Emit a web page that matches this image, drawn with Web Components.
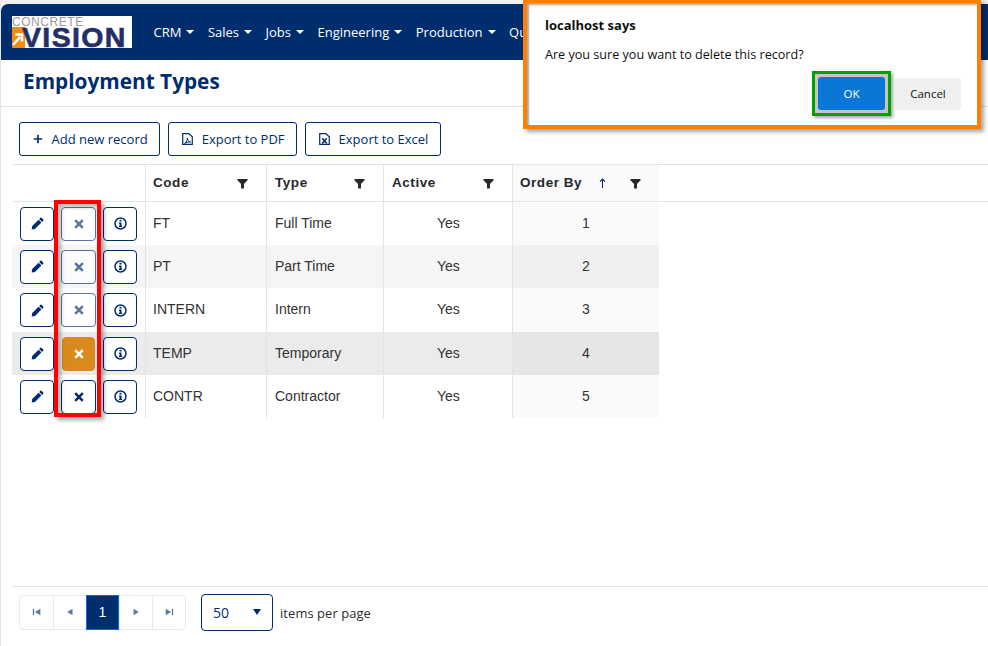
<!DOCTYPE html>
<html lang="en">
<head>
<meta charset="utf-8">
<title>Employment Types</title>
<style>
  html, body { margin: 0; height: 100%; background: #fff; }
  body { font-family: "Open Sans", sans-serif; overflow: hidden; }
</style>
</head>
<body>
<app-page>
  <nav-bar slot="nav"></nav-bar>
  <page-title slot="title">Employment Types</page-title>
  <tool-bar slot="tools">
    <tool-button icon="plus">Add new record</tool-button>
    <tool-button icon="pdf">Export to PDF</tool-button>
    <tool-button icon="excel">Export to Excel</tool-button>
  </tool-bar>
  <data-grid slot="grid"></data-grid>
  <grid-pager slot="pager"></grid-pager>
  <alert-dialog slot="overlay" title="localhost says" message="Are you sure you want to delete this record?"></alert-dialog>
  <mark-box slot="overlay" color="#ff0000" style="left:54px;top:200px;width:47px;height:217px"></mark-box>
</app-page>

<script>
const ICONS = {
    plus: '<path d="M5 1h2v4h4v2H7v4H5V7H1V5h4z"/>',
    pencil: '<path d="M9.7.8l1.6 1.6a.7.7 0 010 1L10.3 4.5 7.6 1.8 8.7.8a.7.7 0 011 0zM7 2.5l2.6 2.6-5.9 5.9-3.1.6.5-3.2z"/>',
    filter: '<path d="M.5 1h11v1.5L7.6 6.5v5H4.4v-5L.5 2.5z"/>',
    first: '<path d="M1 2h1.6v8H1zM10 2v8L3.4 6z"/>',
    prev: '<path d="M9 2v8L2.6 6z"/>',
    next: '<path d="M3 2v8l6.4-4z"/>',
    last: '<path d="M11 2H9.4v8H11zM2 2v8l6.6-4z"/>'
};

function svgIcon(name, size) {
    return `<svg width="${size}" height="${size}" viewBox="0 0 12 12" fill="currentColor" aria-hidden="true">${ICONS[name]}</svg>`;
}

class AppPage extends HTMLElement {
    constructor() {
        super();
        this.attachShadow({ mode: 'open' }).innerHTML = `
            <style>
                :host { display: flex; flex-direction: column; position: relative; width: 988px; height: 646px; overflow: hidden; background: #fff; }
                .top { height: 4px; background: #f1f1f1; }
                .body { flex: 1; display: flex; flex-direction: column; min-height: 0; border-left: 1px solid #e4e4e4; }
                .fill { flex: 1; min-height: 0; padding-left: 11px; }
                .foot { padding-left: 11px; }
            </style>
            <div class="top"></div>
            <div class="body">
                <slot name="nav"></slot>
                <slot name="title"></slot>
                <slot name="tools"></slot>
                <div class="fill"><slot name="grid"></slot></div>
                <div class="foot"><slot name="pager"></slot></div>
            </div>
            <slot name="overlay"></slot>
        `;
    }
}

class NavBar extends HTMLElement {
    constructor() {
        super();
        // the last item is hidden by the dialog after its first two letters
        const items = ['CRM', 'Sales', 'Jobs', 'Engineering', 'Production'];
        this.attachShadow({ mode: 'open' }).innerHTML = `
            <style>
                :host { display: flex; align-items: center; height: 56px; background: #002d6e; border-top-left-radius: 7px; box-sizing: border-box; padding-left: 11px; overflow: hidden; font: 13px "Open Sans", sans-serif; color: #fff; }
                .logo { width: 120px; height: 32px; background: #fff; flex: none; margin-right: 21.5px; box-sizing: border-box; padding-top: 1.5px; display: flex; flex-direction: column; }
                .small { font: 12px/9px "Liberation Sans", sans-serif; color: #9a9a9a; letter-spacing: .55px; height: 9px; }
                .line { display: flex; margin-top: .5px; height: 21px; }
                .arrow { width: 13px; height: 21px; background: #f08c0f; flex: none; }
                .arrow svg { display: block; }
                .big { font: 700 28.5px/21px "Liberation Sans", sans-serif; -webkit-text-stroke: .6px #232f68; color: #232f68; letter-spacing: 1.35px; white-space: nowrap; margin-left: -3px; }
                .item { display: flex; align-items: center; gap: 5px; margin-right: 13.5px; white-space: nowrap; flex: none; }
                .item i { width: 0; height: 0; border: 4px solid transparent; border-top-color: #fff; border-bottom: 0; }
            </style>
            <div class="logo">
                <span class="small">CONCRETE</span>
                <div class="line">
                    <div class="arrow"><svg width="13" height="21" viewBox="0 0 13 21"><path d="M1 18L8 10M3.5 7.5h6.5v7" fill="none" stroke="#fff" stroke-width="2.6"/></svg></div>
                    <span class="big">VISION</span>
                </div>
            </div>
            ${items.map(t => `<div class="item">${t}<i></i></div>`).join('')}
            <div class="item">Qu</div>
        `;
    }
}

class PageTitle extends HTMLElement {
    constructor() {
        super();
        this.attachShadow({ mode: 'open' }).innerHTML = `
            <style>
                :host { display: block; height: 47px; box-sizing: border-box; border-bottom: 1px solid #e2e2e2; padding: 5px 0 0 22px; font: 700 20.8px/32px "Open Sans", sans-serif; color: #002d6e; }
            </style>
            <slot></slot>
        `;
    }
}

class ToolBar extends HTMLElement {
    constructor() {
        super();
        this.attachShadow({ mode: 'open' }).innerHTML = `
            <style>
                :host { display: flex; gap: 8px; padding: 15px 0 0 18px; height: 42px; }
            </style>
            <slot></slot>
        `;
    }
}

class ToolButton extends HTMLElement {
    constructor() {
        super();
        const icon = this.getAttribute('icon');
        let glyph = '';
        if (icon === 'plus') {
            glyph = svgIcon('plus', 10);
        } else {
            // page outline with a small mark in it
            const mark = icon === 'pdf'
                ? '<path d="M2.6 10.4c2-1 3-3.8 2.6-5.4.7 2.2 1.5 3.4 3.4 4-2-.2-4.2.3-6 1.4z" fill="none" stroke="currentColor"/>'
                : '<path d="M3.2 5.2l4.6 5.4M7.8 5.2l-4.6 5.4" fill="none" stroke="currentColor" stroke-width="1.5"/>';
            glyph = `<svg width="11" height="12" viewBox="0 0 11 12"><path d="M.7.7h6.2l3.4 3v7.6H.7z" fill="none" stroke="currentColor" stroke-width="1.2"/>${mark}</svg>`;
        }
        this.attachShadow({ mode: 'open' }).innerHTML = `
            <style>
                :host { display: inline-flex; align-items: center; gap: 8.5px; height: 34px; box-sizing: border-box; padding: 0 11.5px 0 13px; border: 1px solid #002d6e; border-radius: 3px; color: #002d6e; font: 13px "Open Sans", sans-serif; white-space: nowrap; }
                span { display: flex; }
            </style>
            <span>${glyph}</span><slot></slot>
        `;
    }
}

class ActionButton extends HTMLElement {
    constructor() {
        super();
        const kind = this.getAttribute('kind');
        let glyph;
        if (kind === 'info') {
            glyph = '<svg width="13" height="13" viewBox="0 0 13 13"><circle cx="6.5" cy="6.5" r="5.5" fill="none" stroke="currentColor" stroke-width="1.5"/><path d="M5.5 2.8h2v1.7h-2zM4.9 5.4h2.6v3.3h.7V10H4.9V8.7h.7V6.7h-.7z" fill="currentColor"/></svg>';
        } else if (kind === 'cross') {
            glyph = '<svg width="10" height="10" viewBox="0 0 10 10"><path d="M1.2 1.2l7.6 7.6M8.8 1.2L1.2 8.8" stroke="currentColor" stroke-width="2.5" fill="none"/></svg>';
        } else {
            glyph = svgIcon(kind, 13);
        }
        this.attachShadow({ mode: 'open' }).innerHTML = `
            <style>
                :host { display: flex; align-items: center; justify-content: center; width: 34px; height: 34px; box-sizing: border-box; border: 1px solid #002d6e; border-radius: 4px; color: #002d6e; background: #fff; flex: none; }
                :host([state="dim"]) { opacity: .65; width: 35px; }
                :host([state="hover"]) { background: #da8a1c; border-color: #da8a1c; color: #fff; width: 33px; margin: 0 1px; }
                :host([state="solid"]) { width: 35px; }
            </style>
            ${glyph}
        `;
    }
}

class DataGrid extends HTMLElement {
    constructor() {
        super();
        const rows = [
            ['FT', 'Full Time', 'Yes', '1', 'dim', ''],
            ['PT', 'Part Time', 'Yes', '2', 'dim', 'alt'],
            ['INTERN', 'Intern', 'Yes', '3', 'dim', ''],
            ['TEMP', 'Temporary', 'Yes', '4', 'hover', 'hover'],
            ['CONTR', 'Contractor', 'Yes', '5', 'solid', '']
        ];
        const heights = [43, 43, 44, 43, 43];
        const arrow = '<em><svg width="7" height="10" viewBox="0 0 7 10"><path d="M3.5 10V1M1 3.6L3.5 1 6 3.6" fill="none" stroke="currentColor" stroke-width="1.1"/></svg></em>';
        const head = (label, extra = '') => `<div class="th ${extra}"><b>${label}</b>${extra === 'sort' ? arrow : ''}<span class="f">${svgIcon('filter', 11)}</span></div>`;
        this.attachShadow({ mode: 'open' }).innerHTML = `
            <style>
                :host { display: block; font: 14px "Liberation Sans", sans-serif; color: #333; }
                .row { display: grid; grid-template-columns: 133px 121px 117px 129px 147px 1fr; }
                .head { height: 38px; box-sizing: border-box; border-top: 1px solid #e2e4e8; border-bottom: 1px solid #e2e4e8; }
                .th { display: flex; align-items: center; padding: 0 0 0 8px; border-left: 1px solid #e2e4e8; font: 700 13.5px "Liberation Sans", sans-serif; letter-spacing: .55px; color: #26282c; }
                .th b { flex: none; position: relative; top: -1px; }
                .th em { display: flex; color: #002d6e; margin-left: 17px; }
                .th .f { margin-left: auto; margin-right: 18px; display: flex; color: #26282c; }
                .th.first { border-left: 0; padding: 0; }
                .th.sort { background: #fafafa; padding-left: 7px; }
                .th.end { border: 0; background: none; }
                .cell { display: flex; align-items: center; padding: 0 0 2px 8px; border-left: 1px solid #e2e4e8; }
                .row > :nth-child(2) { padding-left: 7px; }
                .cell.act { padding: 0 0 0 8px; border: 0; gap: 7px; }
                .yes { padding-left: 53px; }
                .cell.center { justify-content: center; padding-left: 0; }
                .alt .cell { background: #f5f5f5; }
                .hover .cell { background: #ebebeb; }
                .order { background: #fafafa; }
                .alt .order { background: #f0f0f0; }
                .hover .order { background: #e6e6e6; }
                .row .end { background: #fff; border: 0; }
                .head .end { background: none; }
            </style>
            <div class="row head">
                <div class="th first"></div>
                ${head('Code')}${head('Type')}${head('Active')}${head('Order By', 'sort')}
                <div class="th end"></div>
            </div>
            ${rows.map((r, i) => `
                <div class="row ${r[5]}" style="height:${heights[i]}px">
                    <div class="cell act">
                        <action-button kind="pencil"></action-button>
                        <action-button kind="cross" state="${r[4]}"></action-button>
                        <action-button kind="info"></action-button>
                    </div>
                    <div class="cell">${r[0]}</div>
                    <div class="cell">${r[1]}</div>
                    <div class="cell yes">${r[2]}</div>
                    <div class="cell center order">${r[3]}</div>
                    <div class="cell end"></div>
                </div>`).join('')}
        `;
    }
}

class GridPager extends HTMLElement {
    constructor() {
        super();
        const btn = (name) => `<div class="p">${svgIcon(name, 10)}</div>`;
        this.attachShadow({ mode: 'open' }).innerHTML = `
            <style>
                :host { display: flex; align-items: center; height: 60px; box-sizing: border-box; border-top: 1px solid #e2e4e8; padding: 0 0 9px 7px; font: 12.9px "Open Sans", sans-serif; color: #2b2b2b; }
                .pages { display: flex; height: 35px; border: 1px solid #ebebef; border-radius: 4px; box-sizing: border-box; }
                .p { width: 33px; box-sizing: border-box; display: flex; align-items: center; justify-content: center; color: #5f7aa3; border-left: 1px solid #ebebef; }
                .p:first-child { border-left: 0; }
                .cur { width: 33px; box-sizing: border-box; margin: -1px 0; background: #002d6e; color: #fff; border: 1px solid #0f6ae0; display: flex; align-items: center; justify-content: center; height: 35px; font: 14px "Liberation Sans", sans-serif; }
                .size { display: flex; align-items: center; justify-content: space-between; width: 72px; height: 37px; box-sizing: border-box; margin: 0 7px 0 15px; padding: 0 11px 0 11px; border: 1px solid #002d6e; border-radius: 4px; color: #002d6e; font-size: 14px; }
                .size i { width: 0; height: 0; border: 4.5px solid transparent; border-top: 6px solid #002d6e; border-bottom: 0; }
                .label { letter-spacing: .1px; position: relative; top: 1px; }
            </style>
            <div class="pages">${btn('first')}${btn('prev')}<div class="cur">1</div>${btn('next')}${btn('last')}</div>
            <div class="size">50<i></i></div>
            <span class="label">items per page</span>
        `;
    }
}

class AlertDialog extends HTMLElement {
    constructor() {
        super();
        this.attachShadow({ mode: 'open' }).innerHTML = `
            <style>
                :host { display: block; position: absolute; left: 523px; top: -1px; width: 458px; height: 130px; box-sizing: border-box; background: #fff; border: 4px solid #ff8000; box-shadow: 3px 3px 4px rgba(0,0,0,.35), inset 2px 2px 2px rgba(0,0,0,.35); font: 12.6px "Open Sans", sans-serif; color: #111; }
                .t { position: absolute; left: 18px; top: 13px; font-weight: 700; font-size: 13px; }
                .m { position: absolute; left: 18px; top: 43px; }
                .btns { position: absolute; left: 285px; top: 68px; display: flex; align-items: center; gap: 4px; }
                .ring { width: 79px; height: 45px; box-sizing: border-box; border: 3px solid #00a000; padding: 3px; box-shadow: 2px 2px 3px rgba(0,0,0,.35); background: #c4c4c4; }
                .ok { height: 100%; background: #0a76d6; border-radius: 3px; color: #fff; display: flex; align-items: center; justify-content: center; font-size: 11.5px; }
                .cancel { width: 66px; height: 32px; background: #efefef; border-radius: 3px; display: flex; align-items: center; justify-content: center; font-size: 11.5px; }
            </style>
            <div class="t">${this.getAttribute('title')}</div>
            <div class="m">${this.getAttribute('message')}</div>
            <div class="btns">
                <div class="ring"><div class="ok">OK</div></div>
                <div class="cancel">Cancel</div>
            </div>
        `;
    }
}

class MarkBox extends HTMLElement {
    constructor() {
        super();
        this.attachShadow({ mode: 'open' }).innerHTML = `
            <style>
                :host { display: block; position: absolute; box-sizing: border-box; border: 4px solid ${this.getAttribute('color')}; box-shadow: 3px 3px 4px rgba(0,0,0,.35), inset 3px 3px 4px rgba(0,0,0,.3); pointer-events: none; }
            </style>
        `;
    }
}

customElements.define('action-button', ActionButton);
customElements.define('data-grid', DataGrid);
customElements.define('app-page', AppPage);
customElements.define('nav-bar', NavBar);
customElements.define('page-title', PageTitle);
customElements.define('tool-bar', ToolBar);
customElements.define('tool-button', ToolButton);
customElements.define('grid-pager', GridPager);
customElements.define('alert-dialog', AlertDialog);
customElements.define('mark-box', MarkBox);
</script>
</body>
</html>
